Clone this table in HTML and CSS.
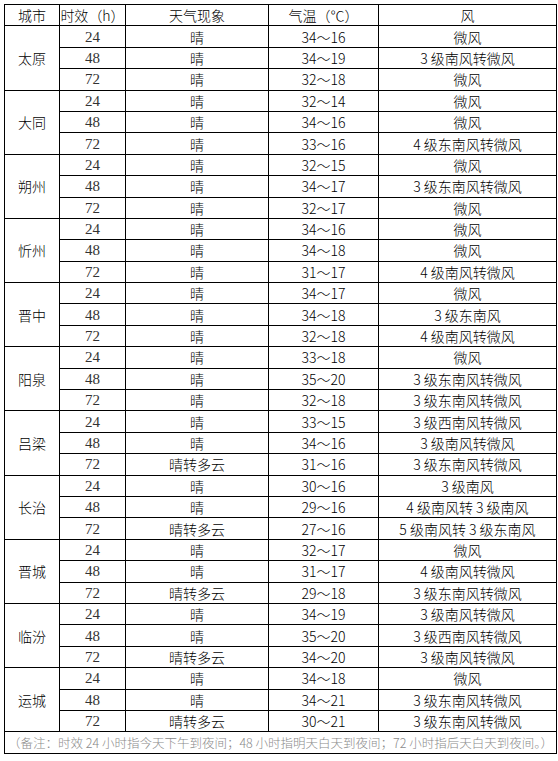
FILE: index.html
```html
<!DOCTYPE html>
<html lang="zh-CN">
<head>
<meta charset="utf-8">
<link rel="stylesheet" href="styles.css">
</head>
<body>
<table class="fc">
<colgroup><col class="c1"><col class="c2"><col class="c3"><col class="c4"><col class="c5"></colgroup>
<tr class="hd"><td>城市</td><td>时效<span class="ser">（h）</span></td><td>天气现象</td><td>气温（℃）</td><td>风</td></tr>
<tr><td rowspan="3">太原</td><td class="t">24</td><td>晴</td><td>34～16</td><td>微风</td></tr>
<tr><td class="t">48</td><td>晴</td><td>34～19</td><td>3 级南风转微风</td></tr>
<tr><td class="t">72</td><td>晴</td><td>32～18</td><td>微风</td></tr>
<tr><td rowspan="3">大同</td><td class="t">24</td><td>晴</td><td>32～14</td><td>微风</td></tr>
<tr><td class="t">48</td><td>晴</td><td>34～16</td><td>微风</td></tr>
<tr><td class="t">72</td><td>晴</td><td>33～16</td><td>4 级东南风转微风</td></tr>
<tr><td rowspan="3">朔州</td><td class="t">24</td><td>晴</td><td>32～15</td><td>微风</td></tr>
<tr><td class="t">48</td><td>晴</td><td>34～17</td><td>3 级东南风转微风</td></tr>
<tr><td class="t">72</td><td>晴</td><td>32～17</td><td>微风</td></tr>
<tr><td rowspan="3">忻州</td><td class="t">24</td><td>晴</td><td>34～16</td><td>微风</td></tr>
<tr><td class="t">48</td><td>晴</td><td>34～18</td><td>微风</td></tr>
<tr><td class="t">72</td><td>晴</td><td>31～17</td><td>4 级南风转微风</td></tr>
<tr><td rowspan="3">晋中</td><td class="t">24</td><td>晴</td><td>34～17</td><td>微风</td></tr>
<tr><td class="t">48</td><td>晴</td><td>34～18</td><td>3 级东南风</td></tr>
<tr><td class="t">72</td><td>晴</td><td>32～18</td><td>4 级南风转微风</td></tr>
<tr><td rowspan="3">阳泉</td><td class="t">24</td><td>晴</td><td>33～18</td><td>微风</td></tr>
<tr><td class="t">48</td><td>晴</td><td>35～20</td><td>3 级东南风转微风</td></tr>
<tr><td class="t">72</td><td>晴</td><td>32～18</td><td>3 级东南风转微风</td></tr>
<tr><td rowspan="3">吕梁</td><td class="t">24</td><td>晴</td><td>33～15</td><td>3 级西南风转微风</td></tr>
<tr><td class="t">48</td><td>晴</td><td>34～16</td><td>3 级南风转微风</td></tr>
<tr><td class="t">72</td><td>晴转多云</td><td>31～16</td><td>3 级东南风转微风</td></tr>
<tr><td rowspan="3">长治</td><td class="t">24</td><td>晴</td><td>30～16</td><td>3 级南风</td></tr>
<tr><td class="t">48</td><td>晴</td><td>29～16</td><td>4 级南风转 3 级南风</td></tr>
<tr><td class="t">72</td><td>晴转多云</td><td>27～16</td><td>5 级南风转 3 级东南风</td></tr>
<tr><td rowspan="3">晋城</td><td class="t">24</td><td>晴</td><td>32～17</td><td>微风</td></tr>
<tr><td class="t">48</td><td>晴</td><td>31～17</td><td>4 级南风转微风</td></tr>
<tr><td class="t">72</td><td>晴转多云</td><td>29～18</td><td>3 级东南风转微风</td></tr>
<tr><td rowspan="3">临汾</td><td class="t">24</td><td>晴</td><td>34～19</td><td>3 级南风转微风</td></tr>
<tr><td class="t">48</td><td>晴</td><td>35～20</td><td>3 级西南风转微风</td></tr>
<tr><td class="t">72</td><td>晴转多云</td><td>34～20</td><td>3 级南风转微风</td></tr>
<tr><td rowspan="3">运城</td><td class="t">24</td><td>晴</td><td>34～18</td><td>微风</td></tr>
<tr><td class="t">48</td><td>晴</td><td>34～21</td><td>3 级东南风转微风</td></tr>
<tr><td class="t">72</td><td>晴转多云</td><td>30～21</td><td>3 级东南风转微风</td></tr>
<tr><td colspan="5" class="note">（备注：时效 24 小时指今天下午到夜间；48 小时指明天白天到夜间；72 小时指后天白天到夜间。）</td></tr>
</table>
</body>
</html>
```
FILE: styles.css
```css
html, body { margin: 0; padding: 0; background: #fff; }
body { padding: 4px 0 0 4px; }
.fc {
  border-collapse: collapse;
  table-layout: fixed;
  width: 552px;
  height: 750px;
  font-family: "Noto Sans CJK SC", "Noto Sans", sans-serif;
  font-weight: 300;
  font-size: 14px;
  color: #000;
}
.c1 { width: 55px; }
.c2 { width: 66px; }
.c3 { width: 143px; }
.c4 { width: 110px; }
.c5 { width: 178px; }
.fc td {
  border: 1px solid #000;
  text-align: center;
  padding: 0;
  height: 20px;
  line-height: 18px;
  white-space: nowrap;
  overflow: hidden;
}
.fc td.t {
  font-family: "Liberation Serif", serif;
  font-weight: 400;
  font-size: 15px;
  color: #333;
}
.ser { font-family: "Noto Sans CJK SC", sans-serif; }
.fc td.note {
  color: #8a8a8a;
  font-size: 12.5px;
}
```
